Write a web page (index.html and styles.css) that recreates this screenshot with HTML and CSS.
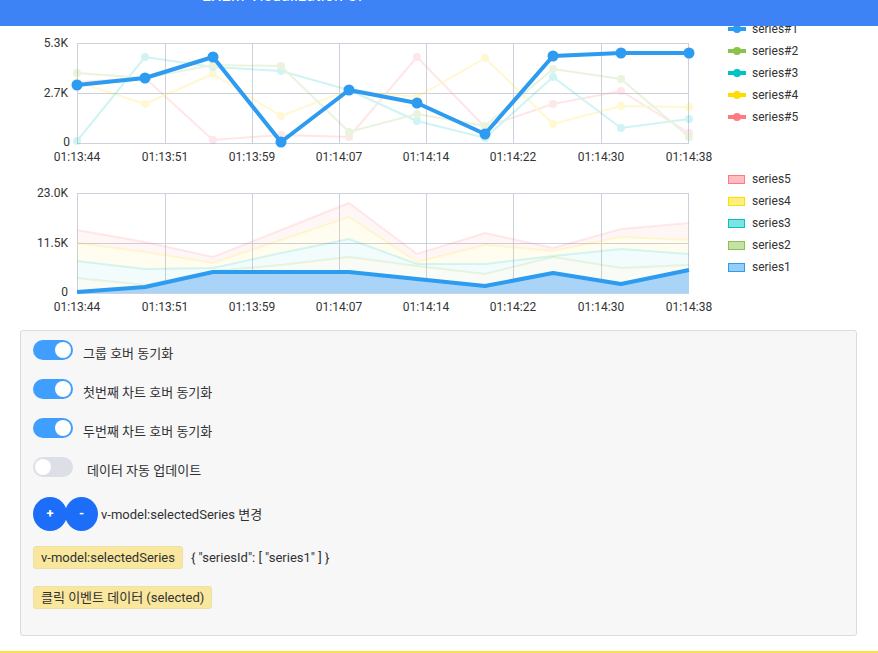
FILE: index.html
```html
<!DOCTYPE html>
<html lang="ko">
<head>
<meta charset="utf-8">
<title>Chart group</title>
<link rel="stylesheet" href="styles.css">
</head>
<body>
<header class="topbar"><div class="title">EXEM Visualization UI</div></header>
<main class="page">
  <section class="chart-row">
    <svg class="chart" width="720" height="150" viewBox="0 18 720 150">
      <g class="grid">
        <line x1="77.5" y1="43" x2="77.5" y2="143"/>
        <line x1="165.5" y1="43" x2="165.5" y2="143"/>
        <line x1="252.5" y1="43" x2="252.5" y2="143"/>
        <line x1="339.5" y1="43" x2="339.5" y2="143"/>
        <line x1="426.5" y1="43" x2="426.5" y2="143"/>
        <line x1="513.5" y1="43" x2="513.5" y2="143"/>
        <line x1="601.5" y1="43" x2="601.5" y2="143"/>
        <line x1="688.5" y1="43" x2="688.5" y2="143"/>
        <line x1="77" y1="43.5" x2="689" y2="43.5"/>
        <line x1="77" y1="93.5" x2="689" y2="93.5"/>
        <line x1="77" y1="143.5" x2="689" y2="143.5"/>
      </g>
      <g class="ylab">
        <text x="68" y="47">5.3K</text>
        <text x="68" y="97">2.7K</text>
        <text x="70" y="146">0</text>
      </g>
      <g class="xlab">
        <text x="77" y="161">01:13:44</text>
        <text x="165" y="161">01:13:51</text>
        <text x="252" y="161">01:13:59</text>
        <text x="339" y="161">01:14:07</text>
        <text x="426" y="161">01:14:14</text>
        <text x="513" y="161">01:14:22</text>
        <text x="601" y="161">01:14:30</text>
        <text x="689" y="161">01:14:38</text>
      </g>
      <g class="faint">
        <g class="s5">
          <polyline points="77,82 145,78 213,140 281,135 349,137 417,57 485,127 553,104 621,91 689,133"/>
          <circle cx="77" cy="82" r="4"/><circle cx="145" cy="78" r="4"/><circle cx="213" cy="140" r="4"/><circle cx="281" cy="135" r="4"/><circle cx="349" cy="137" r="4"/><circle cx="417" cy="57" r="4"/><circle cx="485" cy="127" r="4"/><circle cx="553" cy="104" r="4"/><circle cx="621" cy="91" r="4"/><circle cx="689" cy="133" r="4"/>
        </g>
        <g class="s4">
          <polyline points="77,82 145,104 213,74 281,116 349,90 417,97 485,58 553,124 621,106 689,107"/>
          <circle cx="77" cy="82" r="4"/><circle cx="145" cy="104" r="4"/><circle cx="213" cy="74" r="4"/><circle cx="281" cy="116" r="4"/><circle cx="349" cy="90" r="4"/><circle cx="417" cy="97" r="4"/><circle cx="485" cy="58" r="4"/><circle cx="553" cy="124" r="4"/><circle cx="621" cy="106" r="4"/><circle cx="689" cy="107" r="4"/>
        </g>
        <g class="s3">
          <polyline points="77,141 145,57 213,67 281,71 349,90 417,121 485,138 553,77 621,128 689,119"/>
          <circle cx="77" cy="141" r="4"/><circle cx="145" cy="57" r="4"/><circle cx="213" cy="67" r="4"/><circle cx="281" cy="71" r="4"/><circle cx="349" cy="90" r="4"/><circle cx="417" cy="121" r="4"/><circle cx="485" cy="138" r="4"/><circle cx="553" cy="77" r="4"/><circle cx="621" cy="128" r="4"/><circle cx="689" cy="119" r="4"/>
        </g>
        <g class="s2">
          <polyline points="77,73 145,78 213,65 281,66 349,132 417,114 485,126 553,69 621,79 689,137"/>
          <circle cx="77" cy="73" r="4"/><circle cx="145" cy="78" r="4"/><circle cx="213" cy="65" r="4"/><circle cx="281" cy="66" r="4"/><circle cx="349" cy="132" r="4"/><circle cx="417" cy="114" r="4"/><circle cx="485" cy="126" r="4"/><circle cx="553" cy="69" r="4"/><circle cx="621" cy="79" r="4"/><circle cx="689" cy="137" r="4"/>
        </g>
      </g>
      <g class="s1 main">
        <polyline points="77,85 145,78 213,57 281,142 349,90 417,103 485,134 553,56 621,53 689,53"/>
        <circle cx="77" cy="85" r="5.5"/><circle cx="145" cy="78" r="5.5"/><circle cx="213" cy="57" r="5.5"/><circle cx="281" cy="142" r="5.5"/><circle cx="349" cy="90" r="5.5"/><circle cx="417" cy="103" r="5.5"/><circle cx="485" cy="134" r="5.5"/><circle cx="553" cy="56" r="5.5"/><circle cx="621" cy="53" r="5.5"/><circle cx="689" cy="53" r="5.5"/>
      </g>
    </svg>
    <ul class="legend">
      <li><svg class="lg-line" width="18" height="10" viewBox="0 0 18 10"><line x1="0" y1="5" x2="18" y2="5" stroke="#2d9bf0" stroke-width="4"/><circle cx="9" cy="5" r="4" fill="#2d9bf0"/></svg>series#1</li>
      <li><svg class="lg-line" width="18" height="10" viewBox="0 0 18 10"><line x1="0" y1="5" x2="18" y2="5" stroke="#8bc34a" stroke-width="4"/><circle cx="9" cy="5" r="4" fill="#8bc34a"/></svg>series#2</li>
      <li><svg class="lg-line" width="18" height="10" viewBox="0 0 18 10"><line x1="0" y1="5" x2="18" y2="5" stroke="#00c4c4" stroke-width="4"/><circle cx="9" cy="5" r="4" fill="#00c4c4"/></svg>series#3</li>
      <li><svg class="lg-line" width="18" height="10" viewBox="0 0 18 10"><line x1="0" y1="5" x2="18" y2="5" stroke="#ffdc00" stroke-width="4"/><circle cx="9" cy="5" r="4" fill="#ffdc00"/></svg>series#4</li>
      <li><svg class="lg-line" width="18" height="10" viewBox="0 0 18 10"><line x1="0" y1="5" x2="18" y2="5" stroke="#ff7b83" stroke-width="4"/><circle cx="9" cy="5" r="4" fill="#ff7b83"/></svg>series#5</li>
    </ul>
  </section>

  <section class="chart-row">
    <svg class="chart" width="720" height="150" viewBox="0 168 720 150">
      <g class="grid">
        <line x1="77.5" y1="193" x2="77.5" y2="293"/>
        <line x1="165.5" y1="193" x2="165.5" y2="293"/>
        <line x1="252.5" y1="193" x2="252.5" y2="293"/>
        <line x1="339.5" y1="193" x2="339.5" y2="293"/>
        <line x1="426.5" y1="193" x2="426.5" y2="293"/>
        <line x1="513.5" y1="193" x2="513.5" y2="293"/>
        <line x1="601.5" y1="193" x2="601.5" y2="293"/>
        <line x1="688.5" y1="193" x2="688.5" y2="293"/>
        <line x1="77" y1="193.5" x2="689" y2="193.5"/>
        <line x1="77" y1="243.5" x2="689" y2="243.5"/>
        <line x1="77" y1="293.5" x2="689" y2="293.5"/>
      </g>
      <g class="ylab">
        <text x="68" y="197">23.0K</text>
        <text x="68" y="247">11.5K</text>
        <text x="68" y="296">0</text>
      </g>
      <g class="xlab">
        <text x="77" y="311">01:13:44</text>
        <text x="165" y="311">01:13:51</text>
        <text x="252" y="311">01:13:59</text>
        <text x="339" y="311">01:14:07</text>
        <text x="426" y="311">01:14:14</text>
        <text x="513" y="311">01:14:22</text>
        <text x="601" y="311">01:14:30</text>
        <text x="689" y="311">01:14:38</text>
      </g>
      <g class="bands">
        <polygon class="b5" points="77,230 145,242 213,257 281,230 349,203 417,254 485,233 553,248 621,229 689,223 689,240 621,237 553,251 485,245 417,262 349,217 281,240 213,263 145,252 77,243"/>
        <polygon class="b4" points="77,243 145,252 213,263 281,240 349,217 417,262 485,245 553,251 621,237 689,240 689,254 621,249 553,256 485,264 417,264 349,239 281,253 213,268 145,269 77,261"/>
        <polygon class="b3" points="77,261 145,269 213,268 281,253 349,239 417,264 485,264 553,256 621,249 689,254 689,265 621,268 553,257 485,274 417,266 349,257 281,265 213,271 145,285 77,278"/>
        <polygon class="b2" points="77,278 145,285 213,271 281,265 349,257 417,266 485,274 553,257 621,268 689,265 689,270 621,284 553,273 485,286 417,279 349,272 281,272 213,272 145,287 77,292"/>
        <polyline class="l5" points="77,230 145,242 213,257 281,230 349,203 417,254 485,233 553,248 621,229 689,223"/>
        <polyline class="l4" points="77,243 145,252 213,263 281,240 349,217 417,262 485,245 553,251 621,237 689,240"/>
        <polyline class="l3" points="77,261 145,269 213,268 281,253 349,239 417,264 485,264 553,256 621,249 689,254"/>
        <polyline class="l2" points="77,278 145,285 213,271 281,265 349,257 417,266 485,274 553,257 621,268 689,265"/>
      </g>
      <polygon class="b1" points="77,293 77,292 145,287 213,272 281,272 349,272 417,279 485,286 553,273 621,284 689,270 689,293"/>
      <polyline class="l1" points="77,292 145,287 213,272 281,272 349,272 417,279 485,286 553,273 621,284 689,270"/>
    </svg>
    <ul class="legend">
      <li><span class="lg-box box5"></span>series5</li>
      <li><span class="lg-box box4"></span>series4</li>
      <li><span class="lg-box box3"></span>series3</li>
      <li><span class="lg-box box2"></span>series2</li>
      <li><span class="lg-box box1"></span>series1</li>
    </ul>
  </section>

  <section class="panel">
    <div class="row toggle-row">
      <span class="switch on"><span class="knob"></span></span>
      <span class="label">그룹 호버 동기화</span>
    </div>
    <div class="row toggle-row">
      <span class="switch on"><span class="knob"></span></span>
      <span class="label">첫번째 차트 호버 동기화</span>
    </div>
    <div class="row toggle-row">
      <span class="switch on"><span class="knob"></span></span>
      <span class="label">두번째 차트 호버 동기화</span>
    </div>
    <div class="row toggle-row">
      <span class="switch off"><span class="knob"></span></span>
      <span class="label label-off">데이터 자동 업데이트</span>
    </div>
    <div class="row btn-row">
      <button class="circle-btn">+</button>
      <button class="circle-btn minus">-</button>
      <span class="btn-text">v-model:selectedSeries 변경</span>
    </div>
    <div class="row tag-row">
      <span class="tag">v-model:selectedSeries</span>
      <span class="json">{ "seriesId": [ "series1" ] }</span>
    </div>
    <div class="row tag-row last">
      <span class="tag">클릭 이벤트 데이터 (selected)</span>
    </div>
  </section>
  <div class="bottom-rule"></div>
</main>
</body>
</html>
```

FILE: styles.css
```css
* { box-sizing: border-box; }

html, body {
  margin: 0;
  padding: 0;
  background: #ffffff;
  font-family: Roboto, "Noto Sans CJK KR", sans-serif;
  color: #303133;
  overflow: hidden;
}

.topbar {
  position: fixed;
  top: 0;
  left: 0;
  right: 0;
  height: 26px;
  background: #3d83f6;
  overflow: hidden;
  z-index: 10;
  padding-left: 202px;
}

.title {
  color: #ffffff;
  font-size: 16px;
  line-height: 16px;
  margin-top: -12px;
  letter-spacing: 0.2px;
}

.page {
  padding-top: 18px;
}

.chart-row {
  display: flex;
  align-items: flex-start;
  height: 150px;
}

.chart {
  display: block;
  flex: none;
}

.grid line {
  stroke: #cdd0dd;
  stroke-width: 1;
  shape-rendering: crispEdges;
}

.ylab text {
  font-family: Roboto, sans-serif;
  font-size: 12px;
  fill: #333333;
  text-anchor: end;
}

.xlab text {
  font-family: Roboto, sans-serif;
  font-size: 12px;
  fill: #333333;
  text-anchor: middle;
}

.faint { opacity: 0.18; }
.faint polyline { fill: none; stroke-width: 2; }
.s2 polyline { stroke: #8bc34a; } .s2 circle { fill: #8bc34a; }
.s3 polyline { stroke: #00c4c4; } .s3 circle { fill: #00c4c4; }
.s4 polyline { stroke: #ffdc00; } .s4 circle { fill: #ffdc00; }
.s5 polyline { stroke: #ff7b83; } .s5 circle { fill: #ff7b83; }

.main polyline {
  fill: none;
  stroke: #2d9bf0;
  stroke-width: 4;
  stroke-linejoin: round;
}
.main circle { fill: #2d9bf0; }

.bands polygon { stroke: none; }
.b5 { fill: #ff7b83; fill-opacity: 0.07; }
.b4 { fill: #ffdc00; fill-opacity: 0.06; }
.b3 { fill: #00c4c4; fill-opacity: 0.05; }
.b2 { fill: #8bc34a; fill-opacity: 0.05; }
.bands polyline { fill: none; stroke-width: 2; stroke-opacity: 0.15; }
.l5 { stroke: #ff7b83; }
.l4 { stroke: #ffdc00; }
.l3 { stroke: #00c4c4; }
.l2 { stroke: #8bc34a; }
.b1 { fill: #a9d4f7; }
.l1 { fill: none; stroke: #2d9bf0; stroke-width: 4; stroke-linejoin: round; }

.legend {
  list-style: none;
  margin: 0 0 0 8px;
  padding: 0;
}

.legend li {
  display: flex;
  align-items: center;
  height: 22px;
  font-size: 12px;
  color: #333333;
}

.lg-line {
  display: block;
  margin-right: 6px;
}

.lg-box {
  display: block;
  width: 17px;
  height: 9px;
  margin-right: 7px;
  border: 1px solid;
}
.box5 { background: #ffbdc1; border-color: #ff7b83; }
.box4 { background: #ffee80; border-color: #ffdc00; }
.box3 { background: #80e2e2; border-color: #00c4c4; }
.box2 { background: #c5e1a5; border-color: #8bc34a; }
.box1 { background: #96cdf8; border-color: #2d9bf0; }

.panel {
  margin: 12px 21px 0 20px;
  background: #f7f7f7;
  border: 1px solid #dcdcdc;
  border-radius: 3px;
  padding: 9px 12px 26px;
  font-size: 13px;
  color: #303133;
}

.row {
  display: flex;
}

.toggle-row {
  height: 20px;
  margin-bottom: 19px;
  align-items: flex-start;
}

.switch {
  position: relative;
  display: block;
  width: 40px;
  height: 20px;
  border-radius: 10px;
  flex: none;
}
.switch.on { background: #409eff; }
.switch.off { background: #dcdfe6; }

.knob {
  position: absolute;
  top: 2px;
  width: 16px;
  height: 16px;
  border-radius: 50%;
  background: #ffffff;
}
.switch.on .knob { right: 2px; }
.switch.off .knob { left: 2px; }

.label {
  margin-left: 10px;
  margin-top: 4px;
  line-height: 20px;
  white-space: nowrap;
}
.label-off { margin-left: 14px; margin-top: 4px; }

.btn-row {
  height: 35px;
  align-items: center;
  margin-bottom: 15px;
}

.circle-btn {
  width: 34px;
  height: 34px;
  border-radius: 50%;
  border: none;
  background: #1c6ef9;
  color: #ffffff;
  font-family: Roboto, sans-serif;
  font-size: 13px;
  font-weight: 700;
  padding: 0;
  flex: none;
}
.circle-btn.minus { margin-left: -2px; width: 33px; }

.btn-text {
  margin-left: 3px;
}

.tag-row {
  height: 23px;
  align-items: center;
  margin-bottom: 17px;
}
.tag-row.last { margin-bottom: 0; }

.tag {
  display: inline-block;
  height: 23px;
  line-height: 21px;
  padding: 0 7px;
  background: #f9e79d;
  border: 1px solid #ece0a8;
  border-radius: 3px;
  color: #303133;
  white-space: nowrap;
}

.json {
  margin-left: 8px;
  white-space: nowrap;
}

.bottom-rule {
  margin-top: 15px;
  border-top: 2px solid #fde04b;
}
```
